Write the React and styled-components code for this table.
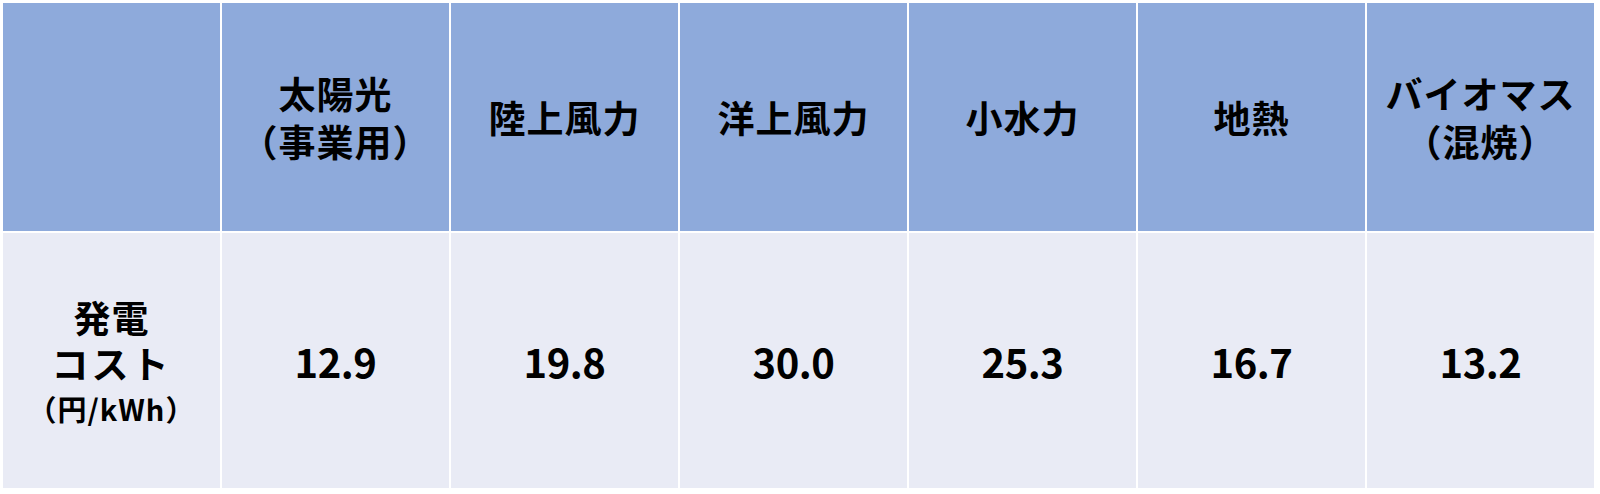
import React from 'react'
import styled, { createGlobalStyle } from 'styled-components'

const GlobalStyle = createGlobalStyle`
  html, body {
    margin: 0;
    padding: 0;
    background: #ffffff;
  }
  body {
    font-family: "Noto Sans CJK JP", "Noto Sans", sans-serif;
    color: #000;
  }
`

const Page = styled.div`
  width: 1600px;
  height: 494px;
  padding: 3px 6px 0 3px;
  box-sizing: border-box;
  background: #ffffff;
`

const Table = styled.div`
  display: grid;
  grid-template-columns: 217px repeat(6, 1fr);
  grid-template-rows: 228px 255px;
  column-gap: 2px;
  row-gap: 2px;
`

const HeadCell = styled.div`
  background: #8eaadb;
  display: flex;
  flex-direction: column;
  align-items: center;
  justify-content: center;
  font-size: 37px;
  font-weight: 700;
  line-height: 48px;
  text-align: center;
  letter-spacing: 1px;
`

const BodyCell = styled.div`
  background: #e9ebf5;
  display: flex;
  flex-direction: column;
  align-items: center;
  justify-content: center;
  font-weight: 700;
  text-align: center;
`

const RowLabel = styled.div`
  font-size: 37px;
  line-height: 46px;
  letter-spacing: ${p => (p.$wide ? '3px' : '1px')};
`

const Unit = styled.div`
  font-size: 29px;
  line-height: 40px;
  letter-spacing: 1px;
  margin-top: 2px;
`

const Value = styled.div`
  font-size: 40px;
  line-height: 48px;
  letter-spacing: -0.5px;
`

const sources = [
  ['太陽光', '（事業用）'],
  ['陸上風力'],
  ['洋上風力'],
  ['小水力'],
  ['地熱'],
  ['バイオマス', '（混焼）'],
]

const costs = ['12.9', '19.8', '30.0', '25.3', '16.7', '13.2']

export default function App() {
  return (
    <>
      <GlobalStyle />
      <Page>
        <Table>
          <HeadCell />
          {sources.map(lines => (
            <HeadCell key={lines[0]}>
              {lines.map(l => <div key={l}>{l}</div>)}
            </HeadCell>
          ))}
          <BodyCell>
            <RowLabel>発電</RowLabel>
            <RowLabel $wide>コスト</RowLabel>
            <Unit>（円/kWh）</Unit>
          </BodyCell>
          {costs.map((c, i) => (
            <BodyCell key={i}>
              <Value>{c}</Value>
            </BodyCell>
          ))}
        </Table>
      </Page>
    </>
  )
}
